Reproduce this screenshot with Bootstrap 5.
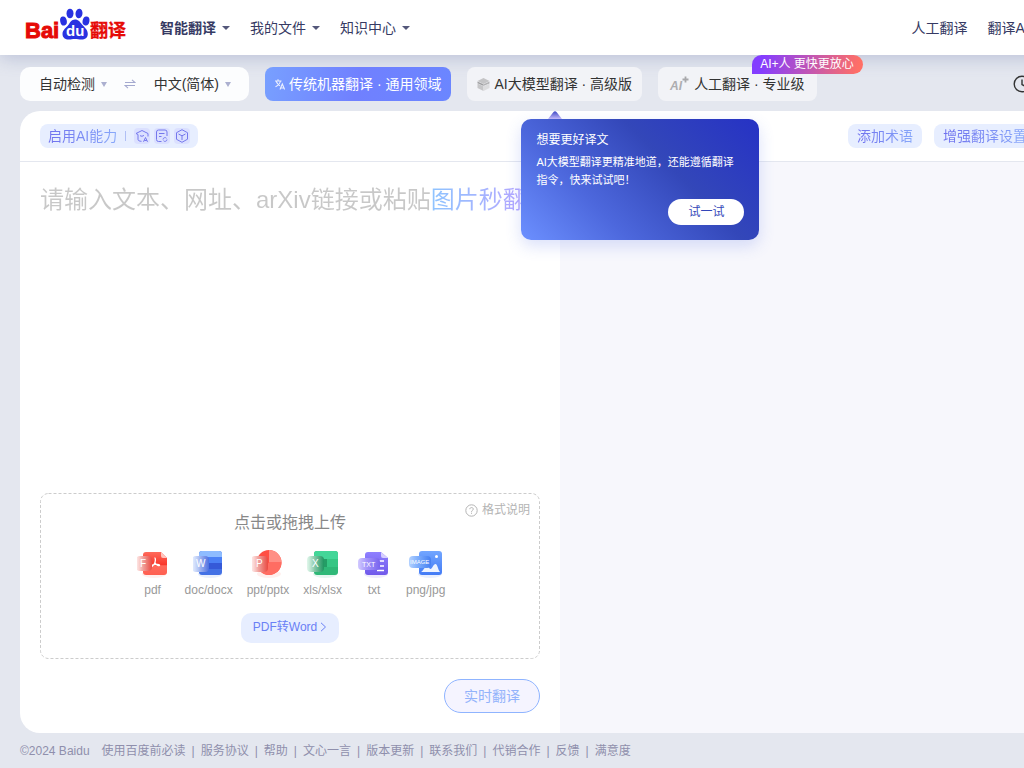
<!DOCTYPE html>
<html lang="zh-CN">
<head>
<meta charset="utf-8">
<meta name="viewport" content="width=device-width, initial-scale=1">
<title>百度翻译</title>
<link href="https://cdn.jsdelivr.net/npm/bootstrap@5.3.0/dist/css/bootstrap.min.css" rel="stylesheet">
<style>
body{font-family:"Liberation Sans","Noto Sans CJK SC",sans-serif;font-size:14px;line-height:20px;color:#333;background:#e4e7ef;overflow-x:hidden}
a{text-decoration:none;color:inherit}
.shell{min-width:1120px;min-height:100vh}
.topbar{height:55px;padding:0 26px;box-shadow:0 4px 16px rgba(94,106,166,.28);color:#363a63}
.brand{width:101px;height:34px}
.main-nav{margin-left:33px}
.top-links{gap:20px}
.top-links button{border:0;background:none;padding:0;color:inherit;gap:6px}
.caret{width:0;height:0;border:4px solid transparent;border-top-color:currentColor;border-bottom:0;opacity:.85}
.toolbar{gap:16px;padding:12px 20px 10px;position:relative}
.langs{width:229px;height:34px;border-radius:10px;background:#fcfdfe;padding:0 18px 0 19px}
.langs button{border:0;background:none;padding:0;gap:6px;color:#333}
.langs .caret{border-width:5px 3px 0;color:#9da2c8}
.mode{height:34px;border:0;border-radius:8px;background:#f2f3f7;color:#333;padding:0 10px;gap:4px;white-space:nowrap}
.mode-on{color:#fff;background:linear-gradient(100deg,#78a0ff,#7080ff 50%,#6b86ff)}
.mode-last{padding:0 12px 0 8px}
.promo{position:absolute;left:94px;top:-12px;height:19px;line-height:18px;font-size:12px;padding:0 9px 0 8px;border-radius:10px 10px 10px 0;color:#fff;white-space:nowrap;background:linear-gradient(100deg,#843dff 10%,#ff6f66 95%)}
.tip{position:absolute;left:54px;top:52px;width:238px;z-index:5;padding:12px 15px 15px;border-radius:10px;color:#fff;font-size:11px;line-height:18px;background:linear-gradient(45deg,#6c90ff,#4d68dd 30%,#3347b9 62%,#2632c5);box-shadow:0 6px 16px rgba(70,100,230,.2)}
.tip h2{font-size:12px;line-height:18px;margin:0 0 4px;font-weight:400}
.tip p{margin:0 0 10px}
.tip button{border:0;border-radius:13px;width:76px;height:26px;background:#fff;color:#3347b9;font-size:12px;padding:0}
.tip-arrow{position:absolute;left:27px;top:-8px}
.history{margin-right:69px}
.board{border-radius:20px;margin:0 20px;background:#fff;overflow:hidden}
.board-top{height:51px;border-bottom:1px solid #e4e7ef;padding:0 20px}
.board-tools{gap:12px;padding-right:44px}
.pill{height:24px;border:0;border-radius:8px;background:#e7eeff;padding:0 8px;white-space:nowrap}
.board-tools .pill{padding:0 9px}
.gtext{background:linear-gradient(90deg,#6f70ee,#88a8fa);-webkit-background-clip:text;background-clip:text;color:transparent}
.bar-sep{width:1px;height:10px;background:#b0bff5;margin:0 8px}
.chip{width:16px;height:16px;border-radius:4px;background:#dbe0ff;color:#7578ed}
.pane-right{background:#f7f7fc}
.pane-left{padding:20px}
.source{border:0;resize:none;outline:0;padding:0;font-size:24px;line-height:36px;width:520px;white-space:nowrap;overflow:hidden;background:none}
.source::placeholder{opacity:1;color:transparent;background:linear-gradient(90deg,#c8c8c8 391px,#8fc4ff 391px,#b9a5ff 490px,#b09cff);-webkit-background-clip:text;background-clip:text}
.drop{position:relative;border-radius:8px;padding:19px 0 16px}
.drop-frame{position:absolute;inset:0;width:100%;height:100%}
.drop-frame rect{width:calc(100% - 1px);height:calc(100% - 1px)}
.drop h3{font-size:16px;line-height:22px;color:#888;font-weight:400;margin:0}
.fmt{position:absolute;right:10px;top:8px;font-size:12px;line-height:18px;color:#b4b4b4;gap:4px}
.files{gap:14px;font-size:12px;line-height:16px;color:#999;margin-top:13px}
.files div{min-width:36px}
.files svg{display:block;margin:0 auto 1px}
.to-word{height:30px;border-radius:10px;background:#e7eeff;color:#6a80f5;font-size:12px;padding:0 12px 2px;gap:3px;margin-top:15px}
.go{width:96px;height:34px;border:1px solid #8fb4ff;border-radius:17px;background:#f5f4ff;color:#93b3fb;margin-top:20px}
.foot{height:35px;padding:0 20px;font-size:12px;color:#8f8fac;gap:12px}
.foot div{gap:6px}
</style>
</head>
<body>
<svg width="0" height="0" class="position-absolute">
<defs>
<linearGradient id="gRed" x1="0" y1="0" x2="0" y2="1"><stop stop-color="#ff6a5b"/><stop offset=".55" stop-color="#f9372c"/><stop offset=".6" stop-color="#ff6a5c"/><stop offset="1" stop-color="#ff5f50"/></linearGradient>
<linearGradient id="gVio" x1="0" y1="0" x2="0" y2="1"><stop stop-color="#8f80ff"/><stop offset="1" stop-color="#7059ea"/></linearGradient>
<linearGradient id="gImg" x1="0" y1="0" x2="0" y2="1"><stop stop-color="#72a6ff"/><stop offset="1" stop-color="#437bf5"/></linearGradient>
<linearGradient id="tRed"><stop stop-color="#ffe4e2" stop-opacity=".7"/><stop offset=".45" stop-color="#f0a09b"/><stop offset="1" stop-color="#ea4a42"/></linearGradient>
<linearGradient id="tBlue"><stop stop-color="#dbe8ff" stop-opacity=".7"/><stop offset=".45" stop-color="#a5b9f1"/><stop offset="1" stop-color="#4f70e0"/></linearGradient>
<linearGradient id="tGreen"><stop stop-color="#d3f3e2" stop-opacity=".7"/><stop offset=".45" stop-color="#86c7a8"/><stop offset="1" stop-color="#1f9560"/></linearGradient>
<linearGradient id="tVio"><stop stop-color="#d2caff"/><stop offset=".4" stop-color="#a495fa"/><stop offset="1" stop-color="#7864ee"/></linearGradient>
<linearGradient id="tImg"><stop stop-color="#b4d2ff"/><stop offset=".4" stop-color="#7eaefc"/><stop offset="1" stop-color="#4680f2"/></linearGradient>
<linearGradient id="gArrow" x1="0" y1="0" x2="0" y2="1"><stop stop-color="#3a45c4"/><stop offset="1" stop-color="#c4b9fa"/></linearGradient>
</defs>
</svg>
<div class="shell d-flex flex-column">
<header class="topbar bg-white d-flex align-items-center">
  <a href="#" class="d-flex" aria-label="百度翻译">
    <svg class="brand overflow-visible" viewBox="0 0 101 34">
      <text x="-1" y="27" font-family="Liberation Sans" font-weight="700" font-size="22" fill="#e60a06" stroke="#e60a06" stroke-width="1">Bai</text>
      <g fill="#2932e1"><ellipse cx="37.500" cy="10" rx="3.300" ry="4.600" transform="rotate(-12 37.500 10)"/><ellipse cx="44" cy="2.500" rx="3.500" ry="4.800"/><ellipse cx="53" cy="2.500" rx="3.500" ry="4.800" transform="rotate(8 53 2.500)"/><ellipse cx="60" cy="10" rx="3.400" ry="4.500" transform="rotate(12 60 10)"/>
      <path d="M49 8.500c3.500 0 5 2.500 7 5 2.500 3 5.800 5 5.800 9.500 0 3.800-3 5.700-6.500 5.600-2.200 0-4-.6-6.500-.6s-3.600.6-6 .6c-3.600 0-6.300-2-6.300-5.600 0-4 3.500-6 6-9.200C44 11.500 45.600 8.500 49 8.500z"/></g>
      <text x="40" y="25" font-family="Liberation Sans" font-weight="700" font-size="15" fill="#fff">du</text>
      <text x="64" y="26" font-family="Noto Sans CJK SC" font-weight="700" font-size="18" fill="#e60a06" stroke="#e60a06" stroke-width=".3">翻译</text>
    </svg></a>
  <nav class="top-links main-nav d-flex">
    <button type="button" class="d-flex align-items-center fw-bold">智能翻译<span class="caret"></span></button>
    <button type="button" class="d-flex align-items-center">我的文件<span class="caret"></span></button>
    <button type="button" class="d-flex align-items-center">知识中心<span class="caret"></span></button>
  </nav>
  <nav class="top-links d-flex ms-auto pe-5"><a href="#">人工翻译</a><a href="#" class="me-2">翻译API</a></nav>
</header>

<div class="toolbar d-flex">
  <div class="langs d-flex align-items-center justify-content-between">
    <button type="button" class="d-flex align-items-center">自动检测<span class="caret"></span></button>
    <button type="button" aria-label="交换语言"><svg class="d-block" width="12" height="10" viewBox="0 0 12 10" fill="none" stroke="#a4a9cf" stroke-width="1.100"><path d="M1 3.500h10L8 .8M11 6.500H1L4 9.200"/></svg></button>
    <button type="button" class="d-flex align-items-center">中文(简体)<span class="caret"></span></button>
  </div>
  <button type="button" class="mode mode-on d-flex align-items-center">
    <svg width="10" height="11" viewBox="0 0 10 11" fill="none" stroke="#fff" stroke-opacity=".85" stroke-width="1.100"><path d="M0 2h6.500M3 .3V2M5.500 2C5 4.500 3 6.500.5 7.800M1.300 2.500C2 4.500 3.500 6 5 6.800M5 10.500 7.300 5l2.300 5.500M5.800 9h3"/></svg>传统机器翻译 · 通用领域</button>
  <div class="position-relative">
    <button type="button" class="mode d-flex align-items-center">
      <svg width="13" height="13" viewBox="0 0 12 13"><path fill="#c4c4c6" d="M0 3 6 0l6 3-6 3z"/><path fill="#a0a0a2" d="M0 3.500 6 6.300V8L0 5.200z"/><path fill="#c6c6c8" d="M0 5.500 6 8.300V13L0 10z"/><path fill="#b4b4b6" d="M12 3.500 6 6.300V8l6-2.500z"/><path fill="#dcdcde" d="M12 5.800 6 8.300V13l6-3z"/></svg>AI大模型翻译 · 高级版</button>
    <aside class="tip">
      <svg class="tip-arrow" width="14" height="8" viewBox="0 0 14 8"><path fill="url(#gArrow)" d="M0 8 5.500 1Q7-.7 8.500 1L14 8z"/></svg>
      <h2>想要更好译文</h2>
      <p>AI大模型翻译更精准地道，还能遵循翻译指令，快来试试吧！</p>
      <button type="button" class="d-block ms-auto">试一试</button>
    </aside>
  </div>
  <div class="position-relative">
    <button type="button" class="mode mode-last d-flex align-items-center">
      <svg width="24" height="18" viewBox="0 0 24 18"><text x="4" y="15" font-family="Liberation Sans" font-size="12" font-weight="700" font-style="italic" fill="#adadb0">AI</text><path d="M16.500 4.500h6M19.500 1.500v6" stroke="#a8a8ab" stroke-width="1.800"/></svg>人工翻译 · 专业级</button>
    <span class="promo">AI+人 更快更放心</span>
  </div>
  <button type="button" class="history btn p-0 border-0 ms-auto" aria-label="历史记录"><svg class="d-block" width="18" height="18" viewBox="0 0 18 18" fill="none" stroke="#333" stroke-width="1.400"><circle cx="9" cy="9" r="7.800"/><path d="M9 4.500V9.500l3.500 2"/></svg></button>
</div>

<main class="board flex-grow-1 d-flex flex-column">
  <div class="board-top d-flex align-items-center justify-content-between">
    <button type="button" class="pill d-flex align-items-center"><span class="gtext">启用AI能力</span><span class="bar-sep"></span>
      <span class="d-flex gap-1">
      <svg class="chip" viewBox="0 0 16 16" fill="none" stroke="currentColor"><path d="M2 5.500 8 2.500l6 3v3M4 6.500v5c0 1 1.500 1.800 3.500 1.800M6 7.500c1 1 3 1 4-.3M2 5.500l2 1M9.500 13.800 11.500 9.500l2 4.300M10.300 12.500h2.500"/></svg>
      <svg class="chip" viewBox="0 0 16 16" fill="none" stroke="currentColor"><path d="M7.500 13.500h-3a2 2 0 0 1-2-2V4a2 2 0 0 1 2-2H11a2 2 0 0 1 2 2v4M5 5.500h5.500M5 8.500h2.500M9 11.500a2 2 0 0 1 3.500-1.200M13 11.500a2 2 0 0 1-3.500 1.200"/></svg>
      <svg class="chip" viewBox="0 0 16 16" fill="none" stroke="currentColor"><path d="m8 1.700 5.500 3v6.500L8 14.300l-5.500-3V4.700zM4.500 6 8 7.800 11.500 6M8 7.800V12"/></svg>
      </span></button>
    <div class="board-tools d-flex">
      <button type="button" class="pill"><span class="gtext">添加术语</span></button>
      <button type="button" class="pill"><span class="gtext">增强翻译设置</span></button>
    </div>
  </div>
  <div class="row g-0 flex-grow-1">
    <section class="col-6 pane-left d-flex flex-column">
      <textarea class="source flex-grow-1" aria-label="原文" placeholder="请输入文本、网址、arXiv链接或粘贴图片秒翻译"></textarea>
      <div class="drop text-center">
        <svg class="drop-frame" aria-hidden="true"><rect x=".5" y=".5" rx="8" fill="none" stroke="#ccc" stroke-dasharray="3 2"/></svg>
        <a href="#" class="fmt d-flex align-items-center"><svg width="13" height="13" viewBox="0 0 13 13" fill="none" stroke="#b4b4b4"><circle cx="6.500" cy="6.500" r="5.700"/><path d="M4.800 5.200c0-2.200 3.500-2.200 3.500 0 0 1.100-1.800 1.200-1.800 2.600M6.500 8.700v1.100"/></svg>格式说明</a>
        <div class="position-relative">
        <h3>点击或拖拽上传</h3>
        <div class="files d-flex justify-content-center">
          <div><svg width="32" height="34" viewBox="1 0 32 34"><ellipse cx="18" cy="27" rx="12" ry="4" fill="#ff7a6b" opacity=".12"/><path fill="url(#gRed)" d="M10 5h15l6 6v14a3 3 0 0 1-3 3H10a3 3 0 0 1-3-3V8a3 3 0 0 1 3-3z"/><path fill="#ffc4bd" d="M25 5v4a2 2 0 0 0 2 2h4z"/><path d="M18.500 11c1.500 0 .8 4 0 5.500-.8 1.500-3 4-3.200 2.700-.2-1.500 7.500-2.700 8.200-1.200.5 1.500-3.500 0-4.500-2" fill="none" stroke="#fff" stroke-width="1.300"/><rect y="9" width="16" height="15" rx="4" fill="url(#tRed)"/><text x="4" y="20" font-size="10" font-family="Liberation Sans" fill="#fff">F</text></svg>pdf</div>
          <div><svg width="32" height="34" viewBox="1 0 32 34"><ellipse cx="18" cy="27" rx="12" ry="4" fill="#4a78e8" opacity=".12"/><rect x="7" y="4" width="23" height="24" rx="3" fill="#4371e5"/><path fill="#8ebcff" d="M7 10V7a3 3 0 0 1 3-3h17a3 3 0 0 1 3 3v3z"/><path fill="#4b80f5" d="M7 10h23v6H7z"/><path fill="#3559d8" d="M7 16h23v6H7z"/><rect y="9" width="17" height="16" rx="4" fill="url(#tBlue)"/><text x="4" y="20" font-size="10" font-family="Liberation Sans" fill="#fff">W</text></svg>doc/docx</div>
          <div><svg width="32" height="34" viewBox="1 0 32 34"><ellipse cx="18" cy="27" rx="12" ry="4" fill="#ff7a6b" opacity=".12"/><circle cx="18" cy="15.500" r="12.500" fill="#ff4f43"/><path fill="#ff8f85" d="M18 3a12.500 12.500 0 0 1 12.500 12.500H18z"/><path fill="#ff6d62" d="M18 15.500h12.500A12.500 12.500 0 0 1 9 24z"/><rect y="9" width="17" height="16" rx="4" fill="url(#tRed)"/><text x="5" y="20" font-size="10" font-family="Liberation Sans" fill="#fff">P</text></svg>ppt/pptx</div>
          <div><svg width="32" height="34" viewBox="0 0 32 34"><ellipse cx="18" cy="27" rx="12" ry="4" fill="#2bb879" opacity=".12"/><rect x="7" y="4" width="24" height="24" rx="3" fill="#2fb877"/><path fill="#43d698" d="M7 12V7a3 3 0 0 1 3-3h18a3 3 0 0 1 3 3v5z"/><path fill="#249d65" d="M7 12h13v8H7z"/><path fill="#36c684" d="M20 12h11v8H20z"/><rect y="9" width="17" height="16" rx="4" fill="url(#tGreen)"/><text x="5" y="20" font-size="10" font-family="Liberation Sans" fill="#fff">X</text></svg>xls/xlsx</div>
          <div><svg width="32" height="34" viewBox="0 0 32 34"><ellipse cx="18" cy="27" rx="12" ry="4" fill="#7059ea" opacity=".12"/><path fill="url(#gVio)" d="M10 5h13l7 6v14a3 3 0 0 1-3 3H10a3 3 0 0 1-3-3V8a3 3 0 0 1 3-3z"/><path fill="#d6cfff" d="M23 5v4a2 2 0 0 0 2 2h5z"/><path d="M19 14h7M22 19h4M19 23.500h7" stroke="#fff" stroke-width="1.500"/><rect y="11" width="22" height="12" rx="4" fill="url(#tVio)"/><text x="4" y="19.500" font-size="7" font-family="Liberation Sans" fill="#fff">TXT</text></svg>txt</div>
          <div><svg width="34" height="34" viewBox="0 0 34 34"><ellipse cx="21" cy="27" rx="12" ry="4" fill="#437bf5" opacity=".12"/><rect x="10" y="4" width="23" height="24" rx="3" fill="url(#gImg)"/><circle cx="27.500" cy="9.500" r="1.500" fill="#fff"/><path fill="#eef4ff" d="M12 25c2-1 4-6 6-6s2 3 3.500 3 3-5 5-5 2.500 6 4.500 8z"/><rect y="9" width="22" height="12" rx="4" fill="url(#tImg)"/><text x="1" y="17" font-size="6" font-family="Liberation Sans" fill="#fff">IMAGE</text></svg>png/jpg</div>
        </div>
        <a href="#" class="to-word d-inline-flex align-items-center">PDF转Word<svg width="7" height="10" viewBox="0 0 7 10" fill="none" stroke="currentColor"><path d="m1 .8 4.500 4.200L1 9.200"/></svg></a>
        </div>
      </div>
      <button type="button" class="go align-self-end">实时翻译</button>
    </section>
    <section class="col-6 pane-right"></section>
  </div>
</main>

<footer class="foot d-flex align-items-center">
  <span>©2024 Baidu</span>
  <div class="d-flex"><a href="#">使用百度前必读</a><span>|</span><a href="#">服务协议</a><span>|</span><a href="#">帮助</a><span>|</span><a href="#">文心一言</a><span>|</span><a href="#">版本更新</a><span>|</span><a href="#">联系我们</a><span>|</span><a href="#">代销合作</a><span>|</span><a href="#">反馈</a><span>|</span><a href="#">满意度</a></div>
</footer>
</div>
<script src="https://cdn.jsdelivr.net/npm/bootstrap@5.3.0/dist/js/bootstrap.bundle.min.js"></script>
</body>
</html>
